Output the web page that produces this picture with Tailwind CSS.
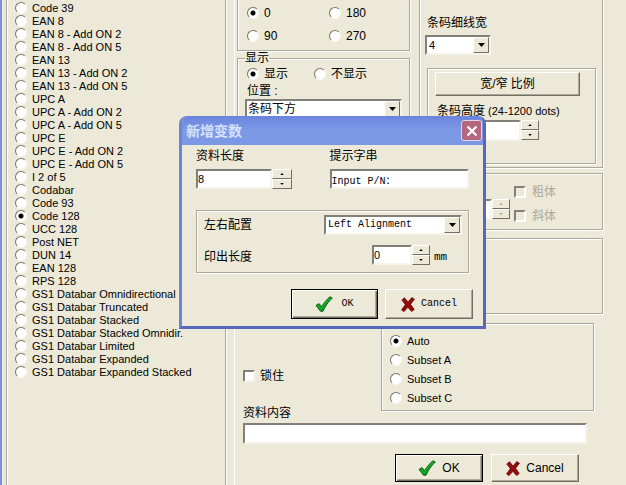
<!DOCTYPE html>
<html lang="zh-CN">
<head>
<meta charset="utf-8">
<title>条码设定</title>
<script src="https://cdn.jsdelivr.net/npm/@tailwindcss/browser@4"></script>
</head>
<body class="relative flex min-h-screen overflow-hidden bg-[#ece9d8] text-[12px] leading-4 text-black font-['Liberation_Sans','Noto_Sans_CJK_SC',sans-serif]">
<svg class="hidden" aria-hidden="true">
  <symbol id="check" viewBox="0 0 18 16"><path d="M1 9.5 4 7.500 6.500 10.500C9 7 12 3 15 .7L17.300 2C13 6 10.500 10 8 15.300H5.500Z" fill="#0a9a1a" stroke="#064a0c" stroke-width=".8"/><path d="M2.500 9.500 6 13C9 8.500 12 5 15.500 2" fill="none" stroke="#18b42a" stroke-width="1.300"/></symbol>
  <symbol id="cross" viewBox="0 0 14 15"><path d="M.8 3 3.500.8 7 5 10.800.6 13.400 2.200 9.600 7.300 13.200 12.500 10.600 14.500 6.900 10.300 3 14.600.6 13 4.300 7.500Z" fill="#930c0c" stroke="#6c0606" stroke-width=".8"/></symbol>
  <symbol id="down" viewBox="0 0 7 4"><path d="M0 0h7L3.500 4Z"/></symbol>
  <symbol id="up" viewBox="0 0 7 4"><path d="M0 4h7L3.500 0Z"/></symbol>
</svg>

<div class="w-[2px] shrink-0 bg-[#7b8fdc]"></div>

<aside id="types" class="ml-1 flex w-[220px] shrink-0 flex-col border-x border-[#aca899] pt-px pl-2 text-[11px] shadow-[1px_0_0_#fff,inset_1px_0_0_#fff]" role="radiogroup" aria-label="条码类型"></aside>

<main class="ml-2 min-w-0 flex-1 border-l border-white">
  <div class="flex h-[323px] gap-[9px] pl-[2px]">
    <section class="w-[173px] shrink-0">
      <div class="grid h-[51px] grid-cols-[82px_1fr] content-start gap-y-[7px] border border-t-0 border-[#aca899] pt-[5px] pl-[9px] shadow-[1px_1px_0_#fff,inset_1px_0_0_#fff]" data-radios="rot" data-items="0*,180,90,270"></div>
      <fieldset class="h-[130px] border border-[#aca899] px-[7px] shadow-[1px_1px_0_#fff,inset_1px_1px_0_#fff]">
        <legend class="leading-[14px]">显示</legend>
        <div class="flex gap-[26px] pt-px pl-[2px]" data-radios="show" data-items="显示*,不显示"></div>
        <label for="pos" class="mt-px block pl-[2px]">位置 :</label>
        <div class="flex h-[20px] border-2 border-[#f6f4ea] border-t-[#808078] border-l-[#808078] bg-white">
          <select id="pos" class="min-w-0 flex-1 appearance-none pl-px leading-4 outline-none"><option>条码下方</option></select>
          <span class="flex w-4 items-center justify-center border border-[#716f64] border-t-white border-l-white bg-[#ece9d8]"><svg class="h-1 w-[7px]"><use href="#down"/></svg></span>
        </div>
      </fieldset>
    </section>

    <section class="flex w-[184px] shrink-0 flex-col">
      <div class="h-[168px] border border-t-0 border-[#aca899] pt-[15px] pr-[6px] pl-[7px] shadow-[1px_1px_0_#fff,inset_1px_0_0_#fff]">
        <label for="thin" class="block">条码细线宽</label>
        <div class="mt-1 -ml-[2px] flex h-[20px] w-[66px] border-2 border-[#f6f4ea] border-t-[#808078] border-l-[#808078] bg-white text-[11px]">
          <select id="thin" class="min-w-0 flex-1 appearance-none pl-[2px] outline-none"><option>4</option></select>
          <span class="flex w-4 items-center justify-center border border-[#716f64] border-t-white border-l-white bg-[#ece9d8]"><svg class="h-1 w-[7px]"><use href="#down"/></svg></span>
        </div>
        <div class="mt-[13px] h-[96px] border border-[#aca899] pt-[3px] pl-[7px] shadow-[1px_1px_0_#fff,inset_1px_1px_0_#fff]">
          <button class="block h-[24px] w-[145px] border border-white border-r-[#716f64] border-b-[#716f64] shadow-[inset_-1px_-1px_0_#aca899]">宽/窄 比例</button>
          <label for="bh" class="mt-[7px] block pl-[2px] text-[11px] whitespace-nowrap"><span class="text-[12px]">条码高度</span> (24-1200 dots)</label>
          <div class="mt-px flex">
            <input id="bh" class="h-[21px] w-[86px] border-2 border-[#f6f4ea] border-t-[#808078] border-l-[#808078] bg-white">
            <div class="flex flex-col" data-spin></div>
          </div>
        </div>
      </div>
      <div class="mt-[5px] flex h-[57px] justify-end gap-1 border border-[#aca899] pr-[46px] shadow-[1px_1px_0_#fff,inset_1px_1px_0_#fff]">
        <div class="mt-[25px] flex">
          <input aria-label="字高" disabled class="h-[21px] w-[50px] border-2 border-[#f6f4ea] border-t-[#808078] border-l-[#808078] bg-white">
          <div class="flex flex-col text-[#aca899]" data-spin></div>
        </div>
        <div class="flex flex-col gap-2 pt-[10px] text-[#aca899]">
          <label class="flex items-center gap-[6px]"><input type="checkbox" disabled class="size-3 appearance-none border-2 border-[#fff] border-t-[#808078] border-l-[#808078]">粗体</label>
          <label class="flex items-center gap-[6px]"><input type="checkbox" disabled class="size-3 appearance-none border-2 border-[#fff] border-t-[#808078] border-l-[#808078]">斜体</label>
        </div>
      </div>
      <div class="mt-[8px] h-[76px] border border-[#aca899] shadow-[1px_1px_0_#fff,inset_1px_1px_0_#fff]"></div>
    </section>
  </div>

  <div class="flex pl-[8px]">
    <label class="flex w-[138px] items-center gap-[5px] self-start pt-[45px]"><input type="checkbox" class="size-3 appearance-none border-2 border-[#f6f4ea] border-t-[#808078] border-l-[#808078] bg-white">锁住</label>
    <div class="flex h-[88px] w-[213px] flex-col gap-[3px] border border-[#aca899] pt-[9px] pl-2 text-[11px] shadow-[1px_1px_0_#fff,inset_1px_1px_0_#fff]" data-radios="sub" data-items="Auto*,Subset A,Subset B,Subset C"></div>
  </div>

  <div class="w-[352px] pl-[8px]">
    <label for="data" class="-mt-[6px] block w-fit">资料内容</label>
    <input id="data" class="mt-[2px] block h-[21px] w-full border-2 border-[#f6f4ea] border-t-[#808078] border-l-[#808078] bg-white px-1">
    <div class="mt-[10px] flex justify-end gap-[8px] pr-[8px] text-[12px]">
      <button class="flex h-[28px] w-[88px] items-center justify-center gap-[6px] border border-black shadow-[inset_1px_1px_0_#fff,inset_-1px_-1px_0_#716f64,inset_-2px_-2px_0_#aca899]"><svg class="h-4 w-[18px]"><use href="#check"/></svg>OK</button>
      <button class="flex h-[28px] w-[88px] items-center justify-center gap-[6px] border border-white border-r-[#716f64] border-b-[#716f64] shadow-[inset_-1px_-1px_0_#aca899]"><svg class="h-[15px] w-[14px]"><use href="#cross"/></svg>Cancel</button>
    </div>
  </div>
</main>

<div role="dialog" aria-labelledby="dt" class="absolute top-[116px] left-[179px] w-[307px] overflow-hidden rounded-t-lg border-x-[3px] border-b-[3px] border-[#6f82d4] border-r-[#5a68bc] border-b-[#5a68bc] bg-[#ece9d8]">
  <header class="flex h-[29px] items-center justify-between bg-linear-to-b from-[#6a84dc] via-[#7d9ae8] to-[#7b98e4] pr-px pl-1">
    <h1 id="dt" class="text-[14px] font-bold text-[#d6e2fb]">新增变数</h1>
    <button aria-label="关闭" class="flex size-[21px] items-center justify-center rounded-[3px] border border-[#e0d4ec] bg-[#b4667e]"><svg class="size-3" viewBox="0 0 12 12"><path d="M1.500 1.500 10.500 10.500M10.500 1.500 1.500 10.500" stroke="#fff" stroke-width="2.200"/></svg></button>
  </header>
  <div class="px-[14px] pt-[3px] pb-[7px]">
    <div class="flex">
      <div class="w-[134px]">
        <label for="len" class="block">资料长度</label>
        <div class="mt-[5px] flex text-[11px]">
          <input id="len" value="8" class="h-[20px] w-[76px] border-2 border-[#f6f4ea] border-t-[#808078] border-l-[#808078] bg-white outline-none">
          <div class="flex flex-col" data-spin="wide"></div>
        </div>
      </div>
      <div class="w-[140px]">
        <label for="prompt" class="block">提示字串</label>
        <input id="prompt" value="Input P/N：" class="mt-[5px] block h-[20px] w-full border-2 border-[#f6f4ea] border-t-[#808078] border-l-[#808078] bg-white text-[10px] font-['Liberation_Mono','Noto_Sans_CJK_SC',monospace] outline-none">
      </div>
    </div>
    <div class="mt-[21px] h-[63px] border border-[#aca899] pt-[4px] pl-[7px] shadow-[1px_1px_0_#fff,inset_1px_1px_0_#fff]">
      <div class="flex items-center">
        <label for="align" class="w-[120px]">左右配置</label>
        <div class="flex h-[20px] w-[138px] border-2 border-[#f6f4ea] border-t-[#808078] border-l-[#808078] bg-white">
          <select id="align" class="min-w-0 flex-1 appearance-none pl-[2px] text-[10px] font-['Liberation_Mono',monospace] outline-none"><option>Left Alignment</option></select>
          <span class="flex w-4 items-center justify-center border border-[#716f64] border-t-white border-l-white bg-[#ece9d8]"><svg class="h-1 w-[7px]"><use href="#down"/></svg></span>
        </div>
      </div>
      <div class="mt-[10px] flex items-end">
        <label for="out" class="w-[168px]">印出长度</label>
        <input id="out" value="0" class="h-[20px] w-[40px] border-2 border-[#f6f4ea] border-t-[#808078] border-l-[#808078] bg-white text-[11px] outline-none">
        <div class="flex flex-col" data-spin></div>
        <span class="pl-1 text-[11px] font-['Liberation_Mono',monospace]">mm</span>
      </div>
    </div>
    <div class="mt-[16px] -mr-[4px] flex justify-end gap-[7px] text-[10px] font-['Liberation_Mono',monospace]">
      <button class="flex h-[30px] w-[87px] items-center justify-center gap-2 border border-black shadow-[inset_1px_1px_0_#fff,inset_-1px_-1px_0_#716f64,inset_-2px_-2px_0_#aca899]"><svg class="h-4 w-[18px]"><use href="#check"/></svg>OK</button>
      <button class="flex h-[30px] w-[88px] items-center justify-center gap-[6px] border border-white border-r-[#716f64] border-b-[#716f64] shadow-[inset_-1px_-1px_0_#aca899]"><svg class="h-[15px] w-[14px]"><use href="#cross"/></svg>Cancel</button>
    </div>
  </div>
</div>

<script>
const radio = (name, text, on, cls) => `<label class="flex items-center gap-[5px] whitespace-nowrap ${cls}"><input type="radio" name="${name}" ${on ? 'checked' : ''} class="size-3 shrink-0 appearance-none rounded-full border border-[#f8f7f0] border-t-[#77756a] border-l-[#77756a] bg-white checked:bg-[radial-gradient(circle,#000_2px,#fff_3px)]">${text}</label>`;
const types = ['Code 39','EAN 8','EAN 8 - Add ON 2','EAN 8 - Add ON 5','EAN 13','EAN 13 - Add ON 2','EAN 13 - Add ON 5','UPC A','UPC A - Add ON 2','UPC A - Add ON 5','UPC E','UPC E - Add ON 2','UPC E - Add ON 5','I 2 of 5','Codabar','Code 93','Code 128','UCC 128','Post NET','DUN 14','EAN 128','RPS 128','GS1 Databar Omnidirectional','GS1 Databar Truncated','GS1 Databar Stacked','GS1 Databar Stacked Omnidir.','GS1 Databar Limited','GS1 Databar Expanded','GS1 Databar Expanded Stacked'];
document.getElementById('types').innerHTML = types.map(t => radio('type', t, t === 'Code 128', 'h-[13px]')).join('');
document.querySelectorAll('[data-radios]').forEach(el => {
  el.innerHTML = el.dataset.items.split(',').map(t => radio(el.dataset.radios, t.replace('*', ''), t.endsWith('*'), 'h-4')).join('');
});
document.querySelectorAll('[data-spin]').forEach(el => {
  const w = el.dataset.spin === 'wide' ? 'w-[20px]' : 'w-[18px]';
  el.innerHTML = [['up', '增加'], ['down', '减少']].map(([d, l]) => `<button aria-label="${l}" class="flex h-[10px] ${w} items-center justify-center border border-white border-r-[#716f64] border-b-[#716f64]"><svg class="h-[2px] w-1 fill-current"><use href="#${d}"/></svg></button>`).join('');
});
</script>
</body>
</html>
